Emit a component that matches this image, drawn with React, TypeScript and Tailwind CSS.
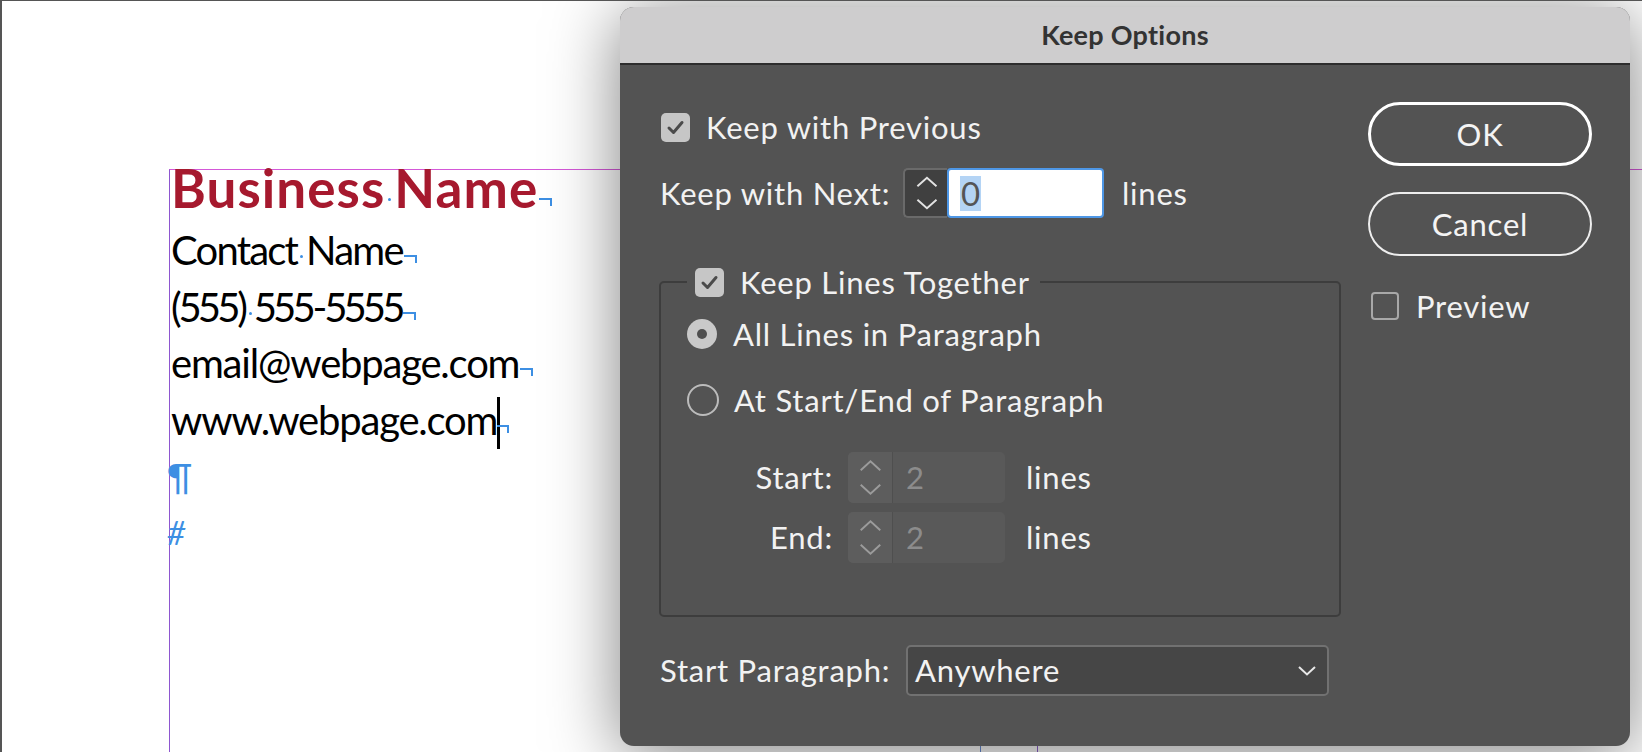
import React from 'react'

const BLUE = 'bg-[#3d8fe3]'

function Space() {
  return <span className={`inline-block w-[3px] h-[3px] rounded-full ${BLUE} mx-[3px] mb-[7px] align-baseline`} />
}

function EndMark() {
  return <span className="inline-block w-[13px] h-[8px] mb-[2px] ml-[1px] border-t-2 border-r-2 border-[#3d8fe3] align-baseline" />
}

function Check({ checked }: { checked: boolean }) {
  if (!checked) {
    return <div className="w-[28px] h-[28px] rounded-[4px] border-2 border-[#a8a8a8]" />
  }
  return (
    <div className="w-[29px] h-[29px] rounded-[5px] bg-[#c6c6c6] flex items-center justify-center">
      <svg width="29" height="29" viewBox="0 0 29 29">
        <path d="M8 15 L12.5 19.5 L21 9.5" fill="none" stroke="#4b4b4b" strokeWidth="3" strokeLinecap="round" strokeLinejoin="round" />
      </svg>
    </div>
  )
}

function Radio({ on }: { on: boolean }) {
  if (on) {
    return (
      <div className="w-[30px] h-[30px] rounded-full bg-[#c9c9c9] flex items-center justify-center">
        <div className="w-[10px] h-[10px] rounded-full bg-[#4f4f4f]" />
      </div>
    )
  }
  return <div className="w-[32px] h-[32px] rounded-full border-2 border-[#bcbcbc]" />
}

function Arrows({ color, w, h }: { color: string; w: number; h: number }) {
  return (
    <svg width={w} height={h} viewBox={`0 0 ${w} ${h}`}>
      <path d="M13 18 L23 9 L33 18" fill="none" stroke={color} strokeWidth="2" />
      <path d={`M13 ${h - 18} L23 ${h - 9} L33 ${h - 18}`} fill="none" stroke={color} strokeWidth="2" />
    </svg>
  )
}

function DisabledSpinner({ value }: { value: string }) {
  return (
    <div className="flex w-[157px] h-[51px] rounded-[5px] bg-[#595959] overflow-hidden">
      <div className="w-[45px] h-full bg-[#5d5d5d] border-r border-[#4f4f4f] flex items-center justify-center">
        <Arrows color="#9b9b9b" w={45} h={51} />
      </div>
      <div className="flex items-center pl-[13px] text-[31px] text-[#8c8c8c]">{value}</div>
    </div>
  )
}

export default function App() {
  const label = 'text-[31px] text-[#f2f2f2] tracking-[0.025em] whitespace-nowrap'
  return (
    <div className="relative w-[1642px] h-[752px] overflow-hidden bg-white border-t border-l-2 border-[#555555]">
      {/* page with text frame */}
      <div className="h-full pl-[167px] pt-[168px]">
        <div className="h-full border-t border-[#d458d8] border-l border-l-[#8e56d0] font-['Lato',sans-serif] text-black">
          <div className="pl-[1px]">
            <div className="text-[53px] font-bold leading-[36px] text-[#a6192e] tracking-[0.02em] whitespace-nowrap">
              Business<Space />Name<EndMark />
            </div>
            <div className="mt-[14px] text-[40px] leading-[56.5px] tracking-[-0.03em] whitespace-nowrap">
              <div className="tracking-[-0.045em]">Contact<Space />Name<EndMark /></div>
              <div className="tracking-[-0.06em] proportional-nums">(555)<Space />555-5555<EndMark /></div>
              <div>email@webpage.com<EndMark /></div>
              <div>
                www.webpage.com
                <span className="inline-block w-[3px] h-[52px] bg-black -mb-[14px] align-baseline" />
                <span className="inline-block w-[12px] h-[8px] mb-[2px] -ml-[3px] border-t-2 border-r-2 border-[#3d8fe3] align-baseline" />
              </div>
              <div className="-ml-[4px] text-[36px] text-[#3d8fe3]">¶</div>
              <div className="-ml-[4px] text-[32px] italic text-[#3d8fe3]">#</div>
            </div>
          </div>
        </div>
      </div>

      {/* column guides under the dialog */}
      <div className="absolute left-[978px] top-[169px] h-[600px] border-l border-[#6b8fd6]" />
      <div className="absolute left-[1035px] top-[169px] h-[600px] border-l border-[#8e63d0]" />

      {/* dialog */}
      <div className="absolute left-[618px] top-[6px] w-[1010px] h-[739px] rounded-[14px] bg-[#535353] shadow-[0_8px_70px_rgba(0,0,0,0.5)] overflow-hidden font-['Lato',sans-serif]">
        <div className="h-[58px] bg-[#cecdce] border-b-2 border-[#2d2d2d] flex items-center justify-center">
          <span className="text-[27px] font-bold text-[#333333] tracking-[0.01em]">Keep Options</span>
        </div>

        <div className="flex">
          {/* left column */}
          <div className="ml-[40px] w-[682px] pt-[47px] flex flex-col">
            <div className="h-[30px] flex items-center gap-[16px] pl-[1px]">
              <Check checked />
              <span className={label}>Keep with Previous</span>
            </div>

            <div className="mt-[26px] h-[50px] flex items-center">
              <span className={`${label} w-[243px]`}>Keep with Next:</span>
              <div className="w-[44px] h-[50px] bg-[#404040] border-2 border-r-0 border-[#6a6a6a] rounded-l-[5px] flex items-center justify-center">
                <Arrows color="#e2e2e2" w={44} h={50} />
              </div>
              <div className="w-[157px] h-[50px] bg-white border-2 border-[#4e97e6] rounded-[4px] flex items-center pl-[11px]">
                <span className="bg-[#b4d4f5] text-[#555555] text-[33px] leading-[35px] px-[1px]">0</span>
              </div>
              <span className={`${label} ml-[18px]`}>lines</span>
            </div>

            <fieldset className="mt-[49px] -ml-[1px] w-[682px] border-2 border-[#3d3d3d] rounded-[5px] px-[26px] pb-[52px]">
              <legend className="px-[8px] pr-[10px]">
                <div className="h-[30px] flex items-center gap-[16px]">
                  <Check checked />
                  <span className={label}>Keep Lines Together</span>
                </div>
              </legend>

              <div className="mt-[21px] h-[32px] flex items-center gap-[16px]">
                <Radio on />
                <span className={label}>All Lines in Paragraph</span>
              </div>
              <div className="mt-[34px] h-[32px] flex items-center gap-[15px]">
                <Radio on={false} />
                <span className={label}>At Start/End of Paragraph</span>
              </div>

              <div className="mt-[36px] h-[51px] flex items-center">
                <span className={`${label} w-[146px] text-right`}>Start:</span>
                <div className="ml-[15px]">
                  <DisabledSpinner value="2" />
                </div>
                <span className={`${label} ml-[21px]`}>lines</span>
              </div>
              <div className="mt-[9px] h-[51px] flex items-center">
                <span className={`${label} w-[146px] text-right`}>End:</span>
                <div className="ml-[15px]">
                  <DisabledSpinner value="2" />
                </div>
                <span className={`${label} ml-[21px]`}>lines</span>
              </div>
            </fieldset>

            <div className="mt-[28px] h-[51px] flex items-center">
              <span className={`${label} w-[246px]`}>Start Paragraph:</span>
              <div className="w-[423px] h-[51px] bg-[#464646] border-2 border-[#717171] rounded-[5px] flex items-center justify-between pl-[7px] pr-[11px]">
                <span className="text-[31px] text-[#f2f2f2] tracking-[0.025em]">Anywhere</span>
                <svg width="18" height="10" viewBox="0 0 18 10">
                  <path d="M1 1 L9 8.5 L17 1" fill="none" stroke="#e8e8e8" strokeWidth="2" />
                </svg>
              </div>
            </div>
          </div>

          {/* right column */}
          <div className="ml-[26px] pt-[37px] flex flex-col">
            <button className="w-[224px] h-[64px] rounded-full border-[3px] border-white text-[31px] text-[#f4f4f4] tracking-[0.025em]">OK</button>
            <button className="mt-[26px] w-[224px] h-[64px] rounded-full border-2 border-[#eeeeee] text-[31px] text-[#f4f4f4] tracking-[0.025em]">Cancel</button>
            <div className="mt-[36px] h-[28px] flex items-center gap-[17px] pl-[3px]">
              <Check checked={false} />
              <span className={label}>Preview</span>
            </div>
          </div>
        </div>
      </div>
    </div>
  )
}
